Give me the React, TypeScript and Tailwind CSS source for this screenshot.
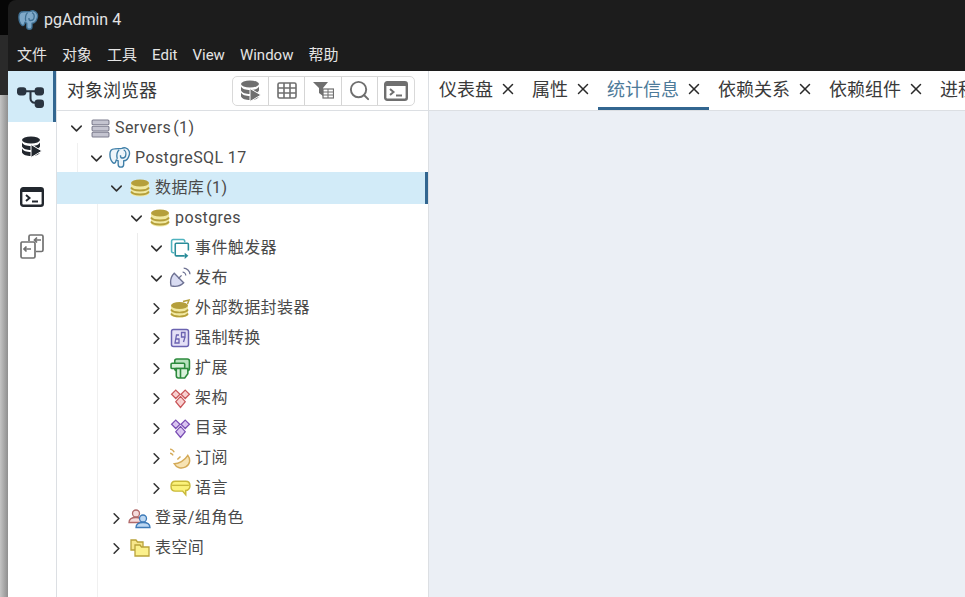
import { ChevronDown, ChevronRight, Search, X } from "lucide-react";
import type { ReactNode } from "react";

const FONT = { fontFamily: 'Roboto, "Noto Sans CJK SC", sans-serif' };

function ElephantIcon({ size = 20, fill, stroke }: { size?: number; fill: string; stroke: string }) {
  return (
    <svg width={size} height={size} viewBox="0 0 24 24" fill="none" stroke={stroke} strokeWidth="1.5" strokeLinejoin="round">
      <path d="M6 2C3 2 1 4 1 8c0 3 1 7 3 9 1 1 2 1 3 0l1-3c1 1 1 1 2 1v4c0 2 1 3 3 3s3-1 3-3v-4c3 0 5-2 6-6 1-3 0-7-4-8-2-.5-3 0-4 .5C12 2 9 1.500 6 2z" fill={fill} />
      <path d="M11 3c-2 2-3 6-2 10M16 3c2 1 3 4 2 7-.5 1.500-2 2-4 2-1 0-1.500-1-1.500-3" />
      <path d="M8 8h.1M16 7h.1" strokeWidth="2" />
    </svg>
  );
}

function TreeIcon() {
  return (
    <svg width="27" height="25" viewBox="0 0 26 24" fill="#2a3440">
      <rect x="0" y="3" width="9" height="8" rx="3" />
      <rect x="17" y="3" width="9" height="8" rx="3" />
      <rect x="17" y="15" width="9" height="8" rx="3" />
      <path d="M8 6h10v2H8zM12 7h2v7a3 3 0 0 0 3 3h2v2h-2a5 5 0 0 1-5-5z" />
    </svg>
  );
}

function DbPlayIcon({ fill }: { fill: string }) {
  return (
    <svg width="22" height="22" viewBox="0 0 22 22" fill={fill}>
      <ellipse cx="10" cy="4" rx="9" ry="3.5" />
      <path d="M1 6.500c1 2.500 5 3.500 9 3.500s8-1 9-3.500v4c-1 2.500-5 3.500-9 3.500s-8-1-9-3.500z" />
      <path d="M1 12.500c1 2.500 5 3.500 9 3.500s8-1 9-3.500v4c-1 2.500-5 3.500-9 3.500s-8-1-9-3.500z" />
      <path d="M10 8.500 21 15l-11 6.500z" stroke="#fff" strokeWidth="1" />
    </svg>
  );
}

function TerminalIcon({ fill }: { fill: string }) {
  return (
    <svg width="24" height="20" viewBox="0 0 24 20" fill="none">
      <rect x="1.200" y="1.200" width="21.600" height="17.600" rx="2" stroke={fill} strokeWidth="2.400" />
      <rect x="1" y="1" width="22" height="4" fill={fill} />
      <path d="M6 8l3.500 3L6 14" stroke={fill} strokeWidth="2" />
      <path d="M12 14.500h6" stroke={fill} strokeWidth="2" />
    </svg>
  );
}

function SwapIcon() {
  return (
    <svg width="26" height="26" viewBox="0 0 26 26" fill="none" stroke="#717171" strokeWidth="1.700">
      <path d="M10 7V2.500a1.500 1.500 0 0 1 1.500-1.500h11A1.500 1.500 0 0 1 24 2.500V16a1.500 1.500 0 0 1-1.500 1.500H17" />
      <path d="M3 8h11.500A1.500 1.500 0 0 1 16 9.500v13a1.500 1.500 0 0 1-1.500 1.500h-11A1.500 1.500 0 0 1 2 22.500v-13A1.500 1.500 0 0 1 3 8z" />
      <path d="M22 6h-6M18 3.500 15.500 6 18 8.500M12 15H5M7.500 12.500 5 15l2.500 2.500" />
    </svg>
  );
}

function GridIcon() {
  return (
    <svg width="20" height="17" viewBox="0 0 20 17" fill="none" stroke="#6f6f6f" strokeWidth="1.600">
      <rect x="1" y="1" width="18" height="15" rx="1.500" />
      <path d="M1 6h18M1 11h18M7 1v15M13 1v15" />
    </svg>
  );
}

function FilterTableIcon() {
  return (
    <svg width="21" height="17" viewBox="0 0 21 17">
      <path d="M0 0h15l-5 6v8l-4-3V6z" fill="#6f6f6f" />
      <rect x="10" y="7" width="10.500" height="9" fill="#fff" stroke="#6f6f6f" strokeWidth="1.200" />
      <path d="M10 10h10M10 13h10M15 7v9" stroke="#6f6f6f" />
    </svg>
  );
}

function ServersIcon() {
  return (
    <svg width="19" height="19" viewBox="0 0 18 18" fill="#c4c4d0" stroke="#7c7c8e" strokeWidth="1">
      <rect x="1" y="1" width="16" height="4.500" rx="1" />
      <rect x="1" y="6.800" width="16" height="4.500" rx="1" />
      <rect x="1" y="12.500" width="16" height="4.500" rx="1" />
    </svg>
  );
}

function CoinsIcon() {
  return (
    <svg width="20" height="20" viewBox="0 0 20 20">
      <path d="M1 5v10c0 2 4 3.500 9 3.500s9-1.500 9-3.500V5z" fill="#f1e9a2" />
      <ellipse cx="10" cy="5" rx="9" ry="3.500" fill="#b59f3b" />
      <path d="M1 9.500c1 2 4 3 9 3s8-1 9-3M1 13.500c1 2 4 3 9 3s8-1 9-3" fill="none" stroke="#b59f3b" strokeWidth="1.800" />
    </svg>
  );
}

function CoinsArrowIcon() {
  return (
    <svg width="21" height="21" viewBox="0 0 21 20">
      <path d="M1 7v9c0 2 4 3 8.500 3s8.500-1 8.500-3V7z" fill="#f1e9a2" />
      <ellipse cx="9.500" cy="7" rx="8.500" ry="3.500" fill="#b59f3b" />
      <path d="M1 11c1 2 4 3 8.500 3s7.500-1 8.500-3M1 15c1 2 4 3 8.500 3s7.500-1 8.500-3" fill="none" stroke="#b59f3b" strokeWidth="1.700" />
      <path d="M13 3l6-1.500-1.500 4" fill="none" stroke="#b59f3b" strokeWidth="1.500" />
    </svg>
  );
}

function TriggerIcon() {
  return (
    <svg width="21" height="21" viewBox="0 0 20 20" fill="none">
      <path d="M4 14H3a1.500 1.500 0 0 1-1.500-1.500V3A1.500 1.500 0 0 1 3 1.500h9.500A1.500 1.500 0 0 1 14 3v1" stroke="#4fb3bf" strokeWidth="1.500" />
      <path d="M17.500 12V6a1 1 0 0 0-1-1H6a1 1 0 0 0-1 1v10a1 1 0 0 0 1 1h8" stroke="#2a8c99" strokeWidth="1.500" />
      <path d="M14 14l3.500 3-3.500 3z" fill="#2a8c99" />
    </svg>
  );
}

function PublicationIcon() {
  return (
    <svg width="22" height="22" viewBox="0 0 21 21" fill="none">
      <path d="M5 6c-3 3-4 8-3 12 4 1 9 0 12-3z" fill="#d9dcf2" stroke="#6d7192" strokeWidth="1.300" />
      <path d="M9 11l3-3" stroke="#6d7192" strokeWidth="1.300" />
      <path d="M13 5c1.500 0 3 1.500 3 3M14 1c3 0 6 3 6 6" stroke="#6d7192" strokeWidth="1.200" />
    </svg>
  );
}

function CastIcon() {
  return (
    <svg width="20" height="20" viewBox="0 0 20 20" fill="none">
      <rect x="1.500" y="1.500" width="17" height="17" rx="2" fill="#e4e0f6" stroke="#6a62b0" strokeWidth="1.500" />
      <path d="M9 7H6.500L5 15h4v-4H5.500" stroke="#6a62b0" strokeWidth="1.300" />
      <path d="M11.500 4.500H15v4.500h-3.500zM15 9l-1.500 5" stroke="#6a62b0" strokeWidth="1.300" />
    </svg>
  );
}

function ExtensionIcon() {
  return (
    <svg width="21" height="21" viewBox="0 0 20 20" fill="none" stroke="#2c8a3c" strokeWidth="1.500">
      <rect x="4.500" y="1" width="14" height="11" rx="2" fill="#b7e2bd" />
      <rect x="1" y="5" width="13" height="5" rx="1" fill="#d8f1da" />
      <path d="M6 10h11v5l-3 4H8a2 2 0 0 1-2-2zM10 10v9" fill="#d8f1da" />
    </svg>
  );
}

function DiamondsIcon({ fill, stroke }: { fill: string; stroke: string }) {
  return (
    <svg width="21" height="21" viewBox="0 0 20 20" fill={fill} stroke={stroke} strokeWidth="1.200">
      <path d="M5.500 2l4 4-4 4-4-4zM14.500 2l4 4-4 4-4-4zM10 8l4.500 5L10 18.500 5.500 13z" />
      <path d="M5.500 6h.1M14.500 6h.1M10 13h.1" strokeWidth="2" />
    </svg>
  );
}

function SubscriptionIcon() {
  return (
    <svg width="23" height="22" viewBox="0 0 22 21" fill="none">
      <path d="M18 8c3 4 2 9-2 11s-9 1-11-3c4 0 10-3 13-8z" fill="#f7e3b3" stroke="#d4aa58" strokeWidth="1.400" />
      <path d="M8 12l3-3" stroke="#d4aa58" strokeWidth="1.400" />
      <path d="M1 2c2 0 3 1 4 3M1 6c1 0 2 .5 3 2" stroke="#d4aa58" strokeWidth="1.300" />
    </svg>
  );
}

function LanguageIcon() {
  return (
    <svg width="21" height="19" viewBox="0 0 20 18" fill="none">
      <path d="M5 2h10c3 0 4 2 4 4.500S17 11 15 11v4l-3-3.500H5c-3 0-4-2-4-4.500S2 2 5 2z" fill="#fbf27a" stroke="#c9b93a" strokeWidth="1.400" />
      <path d="M2 6h16" stroke="#c9b93a" strokeWidth="1.300" />
    </svg>
  );
}

function RolesIcon() {
  return (
    <svg width="24" height="21" viewBox="0 0 24 20" fill="none" strokeWidth="1.300">
      <circle cx="8" cy="5" r="3.500" fill="#f6dcdc" stroke="#b06a6a" />
      <path d="M1 14c0-4 3-5 7-5s6 2 6 5z" fill="#f6dcdc" stroke="#b06a6a" />
      <circle cx="15" cy="10" r="3.500" fill="#bcd7f2" stroke="#3d7ab8" />
      <path d="M8 19c0-4 3-5 7-5s7 1 7 5z" fill="#bcd7f2" stroke="#3d7ab8" />
    </svg>
  );
}

function FoldersIcon() {
  return (
    <svg width="20" height="20" viewBox="0 0 20 20" strokeWidth="1.300">
      <path d="M1 2h5l1.500 2H13v8H1z" fill="#f7e68a" stroke="#b9a23a" />
      <path d="M5 7h5l1.500 2H19v9H5z" fill="#fbf08c" stroke="#b9a23a" />
    </svg>
  );
}

function TreeRow({ depth, open, icon, label, count, selected }: {
  depth: number;
  open: boolean;
  icon: ReactNode;
  label: string;
  count?: string;
  selected?: boolean;
}) {
  const pad = ["pl-[12px]", "pl-[32px]", "pl-[52px]", "pl-[72px]", "pl-[92px]"][depth];
  return (
    <div className={`relative flex items-center ${pad} ${selected ? "-my-[1px] h-[32px] border-r-[3px] border-[#326690] bg-[#d2ebf8]" : "h-[30px]"}`}>
      <span className="flex w-[14px] justify-center text-[#333333]">
        {open ? <ChevronDown size={19} strokeWidth={2} className="shrink-0" /> : <ChevronRight size={19} strokeWidth={2} className="shrink-0" />}
      </span>
      <span className="ml-[7px] flex w-[20px] shrink-0 justify-center [&>svg]:shrink-0">{icon}</span>
      <span className="ml-[5px] text-[16px] tracking-[0.4px] whitespace-nowrap text-[#4a4a4a]">
        {label}
        {count && <span className="ml-[2px]">{count}</span>}
      </span>
    </div>
  );
}

function Tab({ label, active }: { label: string; active?: boolean }) {
  return (
    <div className={`flex h-full shrink-0 items-center gap-[6px] border-b-[3px] pr-[6px] pl-[9px] ${active ? "border-[#326690]" : "border-transparent"}`}>
      <span className={`text-[18px] whitespace-nowrap ${active ? "text-[#4d7a99]" : "text-[#3a3a3a]"}`}>{label}</span>
      <X size={18} strokeWidth={2} className="text-[#2a2a2a]" />
    </div>
  );
}

export default function App() {
  return (
    <div className="flex h-[597px] w-[965px] overflow-hidden bg-[#060606]" style={FONT}>
      {/* what shows behind the window */}
      <div className="flex w-[8px] shrink-0 flex-col">
        <div className="h-[35px] bg-[#060606]" />
        <div className="h-[60px] bg-[#2a2a2a]" />
        <div className="flex-1 bg-gradient-to-r from-[#c4c4c4] to-[#8f8f8f]" />
      </div>

      <div className="flex min-w-0 flex-1 flex-col overflow-hidden rounded-tl-[8px]">
        <div className="flex h-[40px] shrink-0 items-center gap-[5px] bg-[#1c1c1c] pl-[10px]">
          <ElephantIcon size={21} fill="#7fa9c9" stroke="#3f6f92" />
          <span className="text-[16px] text-[#e4e4e4]">pgAdmin 4</span>
        </div>
        <div className="flex h-[31px] shrink-0 items-start gap-[15px] bg-[#1c1c1c] pl-[9px] text-[15px] leading-[30px] text-[#e4e4e4]">
          {["文件", "对象", "工具", "Edit", "View", "Window", "帮助"].map((m) => (
            <span key={m}>{m}</span>
          ))}
        </div>

        <div className="flex min-h-0 flex-1 bg-white">
          {/* icon rail */}
          <div className="flex w-[49px] shrink-0 flex-col border-r border-[#dcdfe3]">
            <div className="flex h-[51px] items-center justify-center border-r-[3px] border-[#326690] bg-[#d2ebf8]">
              <TreeIcon />
            </div>
            <div className="flex h-[50px] items-center justify-center"><DbPlayIcon fill="#22272e" /></div>
            <div className="flex h-[50px] items-center justify-center"><TerminalIcon fill="#22272e" /></div>
            <div className="flex h-[50px] items-center justify-center"><SwapIcon /></div>
          </div>

          {/* object explorer */}
          <div className="flex w-[372px] shrink-0 flex-col border-r border-[#dcdfe3]">
            <div className="flex h-[40px] shrink-0 items-center justify-between border-b border-[#dcdfe3] pr-[13px] pl-[10px]">
              <span className="text-[18px] text-[#3a3a3a]">对象浏览器</span>
              <div className="flex h-[30px] divide-x divide-[#d5d5d5] rounded-[5px] border border-[#d9d9d9]">
                <div className="flex w-[36px] items-center justify-center"><DbPlayIcon fill="#6f6f6f" /></div>
                <div className="flex w-[36px] items-center justify-center"><GridIcon /></div>
                <div className="flex w-[37px] items-center justify-center"><FilterTableIcon /></div>
                <div className="flex w-[36px] items-center justify-center"><Search size={23} strokeWidth={2} className="text-[#6f6f6f]" /></div>
                <div className="flex w-[36px] items-center justify-center"><TerminalIcon fill="#6f6f6f" /></div>
              </div>
            </div>
            <div className="relative pt-[2px]">
              {/* faint indent guides */}
              <div className="absolute top-[32px] left-[20px] h-[60px] w-px bg-[#f0f0f0]" />
              <div className="absolute top-[62px] left-[40px] h-[454px] w-px bg-[#f0f0f0]" />
              <div className="absolute top-[122px] left-[80px] h-[270px] w-px bg-[#ececec]" />
              <TreeRow depth={0} open icon={<ServersIcon />} label="Servers" count="(1)" />
              <TreeRow depth={1} open icon={<ElephantIcon size={22} fill="#eef5fa" stroke="#3f7fa8" />} label="PostgreSQL 17" />
              <TreeRow depth={2} open icon={<CoinsIcon />} label="数据库" count="(1)" selected />
              <TreeRow depth={3} open icon={<CoinsIcon />} label="postgres" />
              <TreeRow depth={4} open icon={<TriggerIcon />} label="事件触发器" />
              <TreeRow depth={4} open icon={<PublicationIcon />} label="发布" />
              <TreeRow depth={4} open={false} icon={<CoinsArrowIcon />} label="外部数据封装器" />
              <TreeRow depth={4} open={false} icon={<CastIcon />} label="强制转换" />
              <TreeRow depth={4} open={false} icon={<ExtensionIcon />} label="扩展" />
              <TreeRow depth={4} open={false} icon={<DiamondsIcon fill="#f9d3d3" stroke="#c9575a" />} label="架构" />
              <TreeRow depth={4} open={false} icon={<DiamondsIcon fill="#dcc8f2" stroke="#7b4fb5" />} label="目录" />
              <TreeRow depth={4} open={false} icon={<SubscriptionIcon />} label="订阅" />
              <TreeRow depth={4} open={false} icon={<LanguageIcon />} label="语言" />
              <TreeRow depth={2} open={false} icon={<RolesIcon />} label="登录/组角色" />
              <TreeRow depth={2} open={false} icon={<FoldersIcon />} label="表空间" />
            </div>
          </div>

          {/* tabs + content */}
          <div className="flex min-w-0 flex-1 flex-col">
            <div className="flex h-[40px] shrink-0 overflow-hidden border-b border-[#dcdfe3] pl-[1px]">
              <Tab label="仪表盘" />
              <Tab label="属性" />
              <Tab label="统计信息" active />
              <Tab label="依赖关系" />
              <Tab label="依赖组件" />
              <Tab label="进程" />
            </div>
            <div className="flex-1 bg-[#ebeff5]" />
          </div>
        </div>
      </div>
    </div>
  );
}
